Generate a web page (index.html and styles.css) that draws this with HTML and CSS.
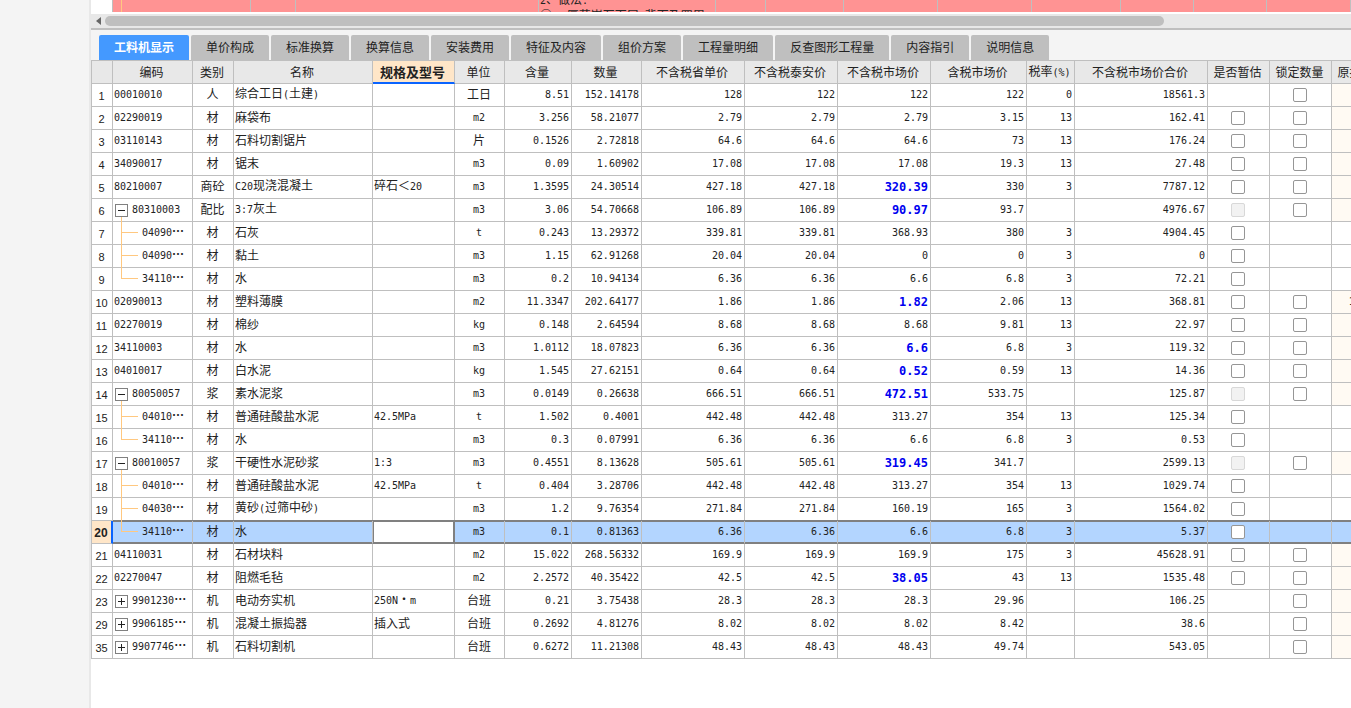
FILE: index.html
```html
<!DOCTYPE html>
<html lang="zh-CN">
<head>
<meta charset="utf-8">
<title>工料机显示</title>
<link rel="stylesheet" href="styles.css">
</head>
<body>
<div class="app">
  <aside class="side"></aside>
  <main class="main">
    <section class="upper">
      <div class="upper-grid">
        <div class="u-num"></div>
        <div class="u-mark"></div>
        <div></div>
        <div></div>
        <div></div>
        <div class="u-text"><p><span class="num">2</span>、做法<span class="num">:</span></p><p>① <span class="num">20</span>厚花岗石面层<span class="num">,</span>背面及四周</p></div>
        <div></div><div></div><div></div><div></div><div></div><div></div><div></div><div></div>
      </div>
      <div class="scrollbar">
        <svg class="arrow" viewBox="0 0 5 8" aria-hidden="true"><path d="M5 0v8L0 4z" fill="#666"/></svg>
        <div class="track"><div class="thumb"></div></div>
      </div>
    </section>
    <nav class="tabs">
      <button class="tab active">工料机显示</button>
      <button class="tab">单价构成</button>
      <button class="tab">标准换算</button>
      <button class="tab">换算信息</button>
      <button class="tab">安装费用</button>
      <button class="tab">特征及内容</button>
      <button class="tab">组价方案</button>
      <button class="tab">工程量明细</button>
      <button class="tab">反查图形工程量</button>
      <button class="tab">内容指引</button>
      <button class="tab">说明信息</button>
    </nav>
    <div class="table-wrap">
      <table class="grid">
        <colgroup>
          <col class="w-idx"><col class="w-code"><col class="w-kind"><col class="w-name"><col class="w-spec"><col class="w-unit"><col class="w-per"><col class="w-qty"><col class="w-prov"><col class="w-city"><col class="w-city"><col class="w-tax"><col class="w-rate"><col class="w-total"><col class="w-flag"><col class="w-flag"><col class="w-flag">
        </colgroup>
        <thead>
          <tr>
            <th></th><th>编码</th><th>类别</th><th>名称</th><th class="current">规格及型号</th><th>单位</th><th>含量</th><th>数量</th><th>不含税省单价</th><th>不含税泰安价</th><th>不含税市场价</th><th>含税市场价</th><th>税率<span class="num">(%)</span></th><th>不含税市场价合价</th><th>是否暂估</th><th>锁定数量</th><th>原损耗率</th>
          </tr>
        </thead>
        <tbody id="rows"></tbody>
      </table>
    </div>
  </main>
</div>
<script src="app.js"></script>
</body>
</html>
```

FILE: styles.css
```css
* { box-sizing: border-box; }

body {
  margin: 0;
  background: #fff;
  color: #222;
  font: 12px/14px "Noto Sans CJK SC", sans-serif;
  overflow: hidden;
}

.app { display: flex; min-height: 100vh; }

.side {
  flex: 0 0 91px;
  background: #f4f4f4;
  border-right: 2px solid #e8e8e8;
}

.main { flex: 1; min-width: 0; }

.num { font-family: "DejaVu Sans Mono", monospace; font-size: 10px; }

/* upper panel */
.upper { border-bottom: 2px solid #bfbfbf; background: #e8e8e8; }

.upper-grid {
  display: grid;
  grid-template-columns: 22px 9px 129px 45px 243px 177px 50px 78px 94px 94px 89px 73px 73px 1fr;
  height: 14px;
  border-bottom: 2px solid #fff;
  overflow: hidden;
}

.upper-grid > div { background: #ff9393; border-right: 1px solid #bfbfbf; }
.upper-grid > .u-num { background: #fff; }
.upper-grid > .u-mark { border-right-color: #ffc880; }

.u-text {
  margin-top: -8px;
  padding-left: 1px;
  white-space: nowrap;
}

.u-text p { margin: 0; }

.scrollbar { display: flex; align-items: center; height: 14px; padding-left: 5px; }
.arrow { width: 5px; height: 8px; }
.track { flex: 1; padding-left: 4px; }
.thumb { width: 85%; height: 10px; border-radius: 5px; background: #bfbfbf; }

/* tabs */
.tabs {
  display: flex;
  gap: 2px;
  padding: 5px 8px 0;
  background: #f4f4f4;
  border-bottom: 1px solid #bfbfbf;
}

.tab {
  height: 25px;
  padding: 0 15px 1px;
  border: 0;
  border-radius: 2px 2px 0 0;
  background: #bfbfbf;
  color: #222;
  font: inherit;
  white-space: nowrap;
}

.tab.active { background: #4499ff; color: #fff; font-weight: bold; }

/* resource grid */
.table-wrap { overflow: hidden; }

.grid {
  width: 1303px;
  table-layout: fixed;
  border-collapse: separate;
  border-spacing: 0;
  border-left: 1px solid #bfbfbf;
}

.w-idx { width: 21px; }
.w-code { width: 80px; }
.w-kind { width: 41px; }
.w-name { width: 139px; }
.w-spec { width: 82px; }
.w-unit { width: 50px; }
.w-per { width: 67px; }
.w-qty { width: 70px; }
.w-prov { width: 103px; }
.w-city { width: 93px; }
.w-tax { width: 96px; }
.w-rate { width: 48px; }
.w-total { width: 133px; }
.w-flag { width: 62px; }

.grid th, .grid td {
  height: 23px;
  border-right: 1px solid #bfbfbf;
  border-bottom: 1px solid #bfbfbf;
  line-height: 14px;
  white-space: nowrap;
  overflow: hidden;
}

.grid th { background: #e8e8e8; font-weight: normal; text-align: center; }
.grid thead th { padding: 0 2px 0 0; }
.grid thead .current { background: #ffe6c8; font-size: 13px; font-weight: bold; border-bottom: 2px solid #0a64ff; }
.grid tbody th { background: #fff; font: 11px/14px "Liberation Sans", sans-serif; padding: 1px 1px 0 0; }
.grid tbody td { padding: 0 2px; text-align: right; }
.grid tbody .c { padding: 0 2px 2px 1px; text-align: center; }
.grid tbody .l { padding: 0 2px 2px; text-align: left; }
.grid tbody .l:not(.code) { padding-left: 1px; }
.grid tbody .code { padding: 0; overflow: visible; }
.grid .changed { color: #0000f0; font-weight: bold; font-size: 12px; }
.grid .loss { background: #fffaf3; }

.code-box { display: flex; align-items: center; height: 22px; padding-left: 1px; }
.code-box.child { padding-left: 0; }
.code-text { padding-bottom: 2px; }
.dots { font-family: "Noto Sans CJK SC", sans-serif; font-weight: bold; font-size: 12px; }

.branch { width: 29px; height: 22px; overflow: visible; }

.toggle {
  position: relative;
  width: 13px;
  height: 13px;
  margin: 0 4px 0 1px;
  padding: 0;
  border: 1px solid #808080;
  background: #fff;
}

.toggle svg { display: block; width: 11px; height: 11px; }

.toggle.open::after {
  content: "";
  position: absolute;
  left: 5px;
  top: 12px;
  width: 1px;
  height: 6px;
  background: #ffc880;
}

.check {
  appearance: none;
  display: block;
  width: 14px;
  height: 14px;
  margin: 1px auto 0;
  border: 1px solid #969696;
  border-radius: 2px;
  background: #fff;
}

.check:disabled { border-color: #d8d8d8; background: #f2f2f2; }

.grid .selected td {
  background: #b3d5ff;
  border-bottom-color: #808080;
  box-shadow: 0 -1px #808080, inset 0 1px #808080, inset 0 -1px #808080;
}

.grid .selected th {
  background: #ffe6c8;
  border-right: 2px solid #0a64ff;
  font-size: 12px;
  font-weight: bold;
}

.grid .selected .editing { background: #fff; border-right-color: #808080; box-shadow: 0 -1px #808080, inset 0 0 0 1px #808080; }
```

FILE: app.js
```js
// index, level marker, code, kind, name, spec, unit, per, qty, province, city, market, taxed, rate, total, estimate, lock
// level marker: "" plain, "-" open, "+" closed, "|" child, "L" last child
// estimate and lock: 0 none, 1 tick box, 2 disabled; "*" marks an edited price
const data = `
1,,00010010,人,综合工日(土建),,工日,8.51,152.14178,128,122,122,122,0,18561.3,0,1
2,,02290019,材,麻袋布,,m2,3.256,58.21077,2.79,2.79,2.79,3.15,13,162.41,1,1
3,,03110143,材,石料切割锯片,,片,0.1526,2.72818,64.6,64.6,64.6,73,13,176.24,1,1
4,,34090017,材,锯末,,m3,0.09,1.60902,17.08,17.08,17.08,19.3,13,27.48,1,1
5,,80210007,商砼,C20现浇混凝土,碎石＜20,m3,1.3595,24.30514,427.18,427.18,*320.39,330,3,7787.12,1,1
6,-,80310003,配比,3:7灰土,,m3,3.06,54.70668,106.89,106.89,*90.97,93.7,,4976.67,2,1
7,|,04090…,材,石灰,,t,0.243,13.29372,339.81,339.81,368.93,380,3,4904.45,1,0
8,|,04090…,材,黏土,,m3,1.15,62.91268,20.04,20.04,0,0,3,0,1,0
9,L,34110…,材,水,,m3,0.2,10.94134,6.36,6.36,6.6,6.8,3,72.21,1,0
10,,02090013,材,塑料薄膜,,m2,11.3347,202.64177,1.86,1.86,*1.82,2.06,13,368.81,1,1,11.3347
11,,02270019,材,棉纱,,kg,0.148,2.64594,8.68,8.68,8.68,9.81,13,22.97,1,1
12,,34110003,材,水,,m3,1.0112,18.07823,6.36,6.36,*6.6,6.8,3,119.32,1,1
13,,04010017,材,白水泥,,kg,1.545,27.62151,0.64,0.64,*0.52,0.59,13,14.36,1,1
14,-,80050057,浆,素水泥浆,,m3,0.0149,0.26638,666.51,666.51,*472.51,533.75,,125.87,2,1
15,|,04010…,材,普通硅酸盐水泥,42.5MPa,t,1.502,0.4001,442.48,442.48,313.27,354,13,125.34,1,0
16,L,34110…,材,水,,m3,0.3,0.07991,6.36,6.36,6.6,6.8,3,0.53,1,0
17,-,80010057,浆,干硬性水泥砂浆,1:3,m3,0.4551,8.13628,505.61,505.61,*319.45,341.7,,2599.13,2,1
18,|,04010…,材,普通硅酸盐水泥,42.5MPa,t,0.404,3.28706,442.48,442.48,313.27,354,13,1029.74,1,0
19,|,04030…,材,黄砂(过筛中砂),,m3,1.2,9.76354,271.84,271.84,160.19,165,3,1564.02,1,0
20,L,34110…,材,水,,m3,0.1,0.81363,6.36,6.36,6.6,6.8,3,5.37,1,0
21,,04110031,材,石材块料,,m2,15.022,268.56332,169.9,169.9,169.9,175,3,45628.91,1,1
22,,02270047,材,阻燃毛毡,,m2,2.2572,40.35422,42.5,42.5,*38.05,43,13,1535.48,1,1
23,+,9901230…,机,电动夯实机,250N·m,台班,0.21,3.75438,28.3,28.3,28.3,29.96,,106.25,0,1
29,+,9906185…,机,混凝土振捣器,插入式,台班,0.2692,4.81276,8.02,8.02,8.02,8.42,,38.6,0,1
35,+,9907746…,机,石料切割机,,台班,0.6272,11.21308,48.43,48.43,48.43,49.74,,543.05,0,1
`.trim().split("\n").map(line => line.split(","));

const latin = text => text
  .replace(/[\x21-\x7e]+/g, part => `<span class="num">${part}</span>`)
  .replace("…", '<span class="dots">…</span>');

function codeCell(level, code) {
  let lead = "";
  if (level === "-" || level === "+") {
    const bar = level === "+" ? "M2 5.5h7M5.5 2v7" : "M2 5.5h7";
    const label = level === "+" ? "展开" : "折叠";
    lead = `<button class="toggle ${level === "-" ? "open" : ""}" aria-label="${label}"><svg viewBox="0 0 11 11"><path d="${bar}" stroke="#222"/></svg></button>`;
  } else if (level) {
    const end = level === "L" ? 11 : 23;
    lead = `<svg class="branch" viewBox="0 0 29 22"><path d="M8.500 0V${end}M8 10.500H25" fill="none" stroke="#ffc880"/></svg>`;
  }
  const child = level === "|" || level === "L" ? "child" : "";
  return `<td class="code l"><div class="code-box ${child}">${lead}<span class="code-text">${latin(code)}</span></div></td>`;
}

function flagCell(state, label) {
  const box = state === "0" ? "" : `<input class="check" type="checkbox" aria-label="${label}"${state === "2" ? " disabled" : ""}>`;
  return `<td class="c">${box}</td>`;
}

document.getElementById("rows").innerHTML = data.map(r => {
  const [index, level, code, kind, name, spec, unit, ...rest] = r;
  const selected = index === "20";
  const numbers = rest.slice(0, 8).map(v => v[0] === "*"
    ? `<td class="num changed">${v.slice(1)}</td>`
    : `<td class="num">${v}</td>`).join("");
  return `<tr class="${selected ? "selected" : ""}"><th scope="row">${index}</th>${codeCell(level, code)}` +
    `<td class="c">${kind}</td><td class="l">${latin(name)}</td>` +
    `<td class="l ${selected ? "editing" : ""}">${latin(spec)}</td><td class="c">${latin(unit)}</td>` +
    numbers + flagCell(rest[8], "是否暂估") + flagCell(rest[9], "锁定数量") +
    `<td class="num ${rest[9] === "1" ? "loss" : ""}">${rest[10] || ""}</td></tr>`;
}).join("");
```
